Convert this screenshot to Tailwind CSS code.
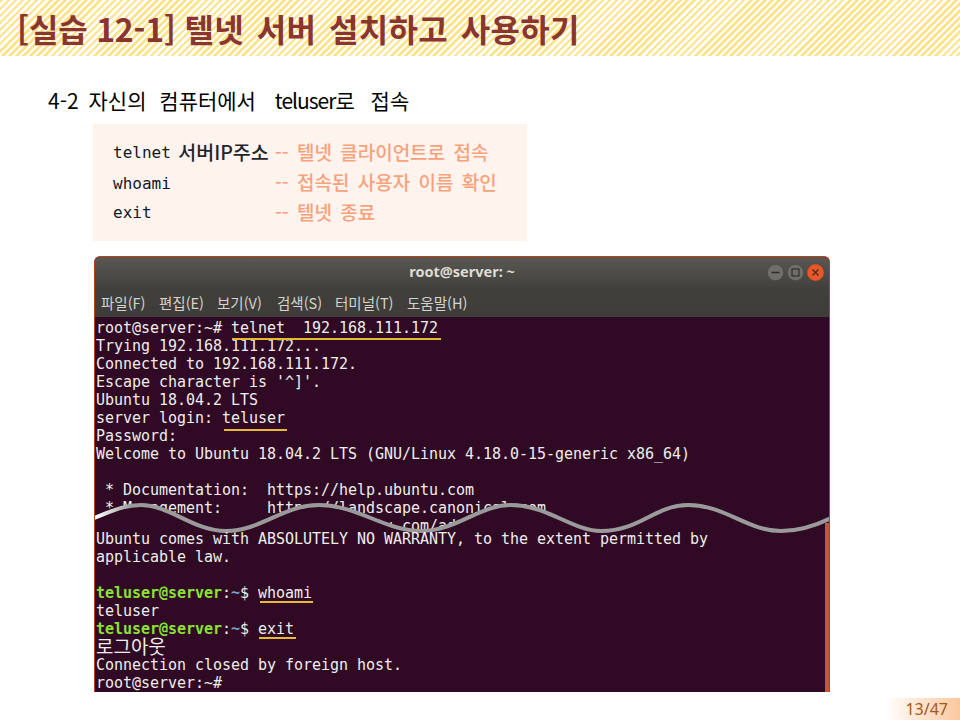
<!DOCTYPE html>
<html lang="ko">
<head>
<meta charset="utf-8">
<script src="https://cdn.jsdelivr.net/npm/@tailwindcss/browser@4"></script>
</head>
<body class="bg-white font-['Noto_Sans_CJK_KR','Noto_Sans',sans-serif]">
<div class="relative w-[960px] h-[720px] overflow-hidden bg-white">
  <header class="h-[56px] pl-[17px] flex items-center bg-[repeating-linear-gradient(135deg,#fde58f_0,#fde58f_2.5px,#ffffff_2.5px,#ffffff_5px)]">
    <h1 class="text-[32px] leading-none font-bold text-[#8b352f] whitespace-pre"><span class="tracking-[-0.2px]">[실습 12-1] </span><span class="tracking-[0.3px] [word-spacing:3.5px]">텔넷 서버 설치하고 사용하기</span></h1>
  </header>
  <p class="mt-[32px] ml-[48px] h-[24px] text-[21px] leading-[24px] text-black whitespace-pre [word-spacing:10px]"><span class="[word-spacing:4px]">4-2 </span><span class="[word-spacing:7px]">자신의 </span><span class="[word-spacing:13px]">컴퓨터에서 </span><span class="tracking-[-1px]">teluser</span>로 접속</p>
  <div class="mt-[12px] ml-[93px] w-[434px] h-[117px] bg-[#fff3ee] pt-[13px] pl-[20px] text-[19px] font-medium leading-[30px] text-[#1f2630]">
    <div class="flex h-[30px]"><span class="w-[162px] whitespace-pre"><span class="inline-block -translate-y-[2px] font-['DejaVu_Sans_Mono'] text-[16px] font-normal text-[#111827]">telnet</span><span class="ml-[2px] text-[19.5px]"> 서버IP주소</span></span><span class="text-[#f8a27c] whitespace-pre [word-spacing:3px]">-- 텔넷 클라이언트로 접속</span></div>
    <div class="flex h-[30px]"><span class="w-[162px] pt-[2px] font-['DejaVu_Sans_Mono'] text-[16px] font-normal text-[#111827]">whoami</span><span class="text-[#f8a27c] whitespace-pre [word-spacing:3px]">-- 접속된 사용자 이름 확인</span></div>
    <div class="flex h-[30px]"><span class="w-[162px] pt-[1px] font-['DejaVu_Sans_Mono'] text-[16px] font-normal text-[#111827]">exit</span><span class="text-[#f8a27c] whitespace-pre [word-spacing:3px]">-- 텔넷 종료</span></div>
  </div>
  <section class="relative mt-[15px] ml-[94px] w-[736px] h-[436px] bg-[#300a24] border border-b-0 border-[#b8421c] rounded-t-[6px] overflow-hidden">
    <div class="h-[60px] flex items-center justify-center bg-[linear-gradient(#5a5852,#403f3b_55%,#3e3d39)] text-[14.5px] font-bold text-[#dfdbd2] font-['Noto_Sans',sans-serif]">
      <span class="-translate-y-[15px]">root@server: ~</span>
    </div>
    <div class="absolute top-[7px] right-[5.5px] flex gap-[3px]">
      <svg class="w-[17px] h-[17px]" viewBox="0 0 17 17"><circle cx="8.5" cy="8.5" r="8.2" fill="#6f6e69" stroke="#4a4945" stroke-width="0.8"/><path d="M4.5 8.5h8" stroke="#2f2e2b" stroke-width="1.4"/></svg>
      <svg class="w-[17px] h-[17px]" viewBox="0 0 17 17"><circle cx="8.5" cy="8.5" r="8.2" fill="#6f6e69" stroke="#4a4945" stroke-width="0.8"/><rect x="5" y="5" width="7" height="7" fill="none" stroke="#2f2e2b" stroke-width="1.2"/></svg>
      <svg class="w-[17px] h-[17px]" viewBox="0 0 17 17"><circle cx="8.5" cy="8.5" r="8.2" fill="#e9582a" stroke="#c5481f" stroke-width="0.8"/><path d="M5.5 5.5l6 6M11.5 5.5l-6 6" stroke="#4a2a1a" stroke-width="1.3"/></svg>
    </div>
    <nav class="absolute top-[34px] left-0 h-[24px] w-full text-[14.5px] leading-[24px] text-[#d6d3cc] flex pl-[6px]">
      <span class="w-[58px] whitespace-pre">파일(F)</span><span class="w-[58px] whitespace-pre">편집(E)</span><span class="w-[60px] whitespace-pre">보기(V)</span><span class="w-[58px] whitespace-pre">검색(S)</span><span class="w-[72px] whitespace-pre">터미널(T)</span><span class="whitespace-pre">도움말(H)</span>
    </nav>
    <div class="h-[236px] pt-[2px] pl-[1px] overflow-hidden font-['DejaVu_Sans_Mono',monospace] text-[15px] tracking-[-0.03px] leading-[18px] text-[#eeeeec]">
      <div class="h-[18px] whitespace-pre">root@server:~# telnet  192.168.111.172</div>
      <div class="h-[18px] whitespace-pre">Trying 192.168.111.172...</div>
      <div class="h-[18px] whitespace-pre">Connected to 192.168.111.172.</div>
      <div class="h-[18px] whitespace-pre">Escape character is '^]'.</div>
      <div class="h-[18px] whitespace-pre">Ubuntu 18.04.2 LTS</div>
      <div class="h-[18px] whitespace-pre">server login: teluser</div>
      <div class="h-[18px] whitespace-pre">Password:</div>
      <div class="h-[18px] whitespace-pre">Welcome to Ubuntu 18.04.2 LTS (GNU/Linux 4.18.0-15-generic x86_64)</div>
      <div class="h-[18px] whitespace-pre"> </div>
      <div class="h-[18px] whitespace-pre"> * Documentation:  https://help.ubuntu.com</div>
      <div class="h-[18px] whitespace-pre"> * Management:     https://landscape.canonical.com</div>
      <div class="h-[18px] whitespace-pre"> * Support:        https://ubuntu.com/advantage</div>
    </div>
    <svg class="absolute left-0 top-0 w-[736px] h-[436px]" viewBox="0 0 736 436" fill="none">
      <defs>
        <linearGradient id="waveStroke" gradientUnits="userSpaceOnUse" x1="0" y1="0" x2="736" y2="0">
          <stop offset="0" stop-color="#ffffff"/>
          <stop offset="0.05" stop-color="#9a9a9a"/>
          <stop offset="1" stop-color="#9a9a9a"/>
        </linearGradient>
      </defs>
      <path d="M-1 261 C15 255 28 248 46 248 C75 248 98 274 131 274 C166 274 188 248 224 248 C262 248 290 274 326 274 C362 274 384 248 416 248 C452 248 478 274 506 274 C545 274 560 248 593 248 C630 248 652 274 686 274 C705 274 722 268 736 261 L736 436 L-1 436 Z" fill="#300a24"/>
      <rect x="730" y="266" width="6" height="170" fill="#c05a35"/>
      <path d="M-1 261 C15 255 28 248 46 248 C75 248 98 274 131 274 C166 274 188 248 224 248 C262 248 290 274 326 274 C362 274 384 248 416 248 C452 248 478 274 506 274 C545 274 560 248 593 248 C630 248 652 274 686 274 C705 274 722 268 736 261" stroke="url(#waveStroke)" stroke-width="4"/>
      <path d="M137 82H346M129 173H192M165 345H218M164 381H201" stroke="#e6bc2e" stroke-width="2"/>
    </svg>
    <div class="absolute left-[1px] bottom-0 font-['DejaVu_Sans_Mono',monospace] text-[15px] tracking-[-0.03px] leading-[18px] text-[#eeeeec]">
      <div class="h-[18px] whitespace-pre">Ubuntu comes with ABSOLUTELY NO WARRANTY, to the extent permitted by</div>
      <div class="h-[18px] whitespace-pre">applicable law.</div>
      <div class="h-[18px] whitespace-pre"> </div>
      <div class="h-[18px] whitespace-pre"><span class="font-bold text-[#8ae234]">teluser@server</span>:<span class="font-bold text-[#729fcf]">~</span>$ whoami</div>
      <div class="h-[18px] whitespace-pre">teluser</div>
      <div class="h-[18px] whitespace-pre"><span class="font-bold text-[#8ae234]">teluser@server</span>:<span class="font-bold text-[#729fcf]">~</span>$ exit</div>
      <div class="h-[18px] whitespace-pre font-['Noto_Sans_CJK_KR'] text-[19px] leading-[16px]">로그아웃</div>
      <div class="h-[18px] whitespace-pre">Connection closed by foreign host.</div>
      <div class="h-[18px] whitespace-pre">root@server:~#</div>
    </div>
  </section>
  <div class="absolute right-0 bottom-0 w-[75px] h-[22px] bg-[linear-gradient(90deg,#ffffff,#fbc79c)] pr-[12px] text-right text-[16px] leading-[22px] text-[#a5561f] font-['Noto_Sans',sans-serif]">13/47</div>
</div>
</body>
</html>
